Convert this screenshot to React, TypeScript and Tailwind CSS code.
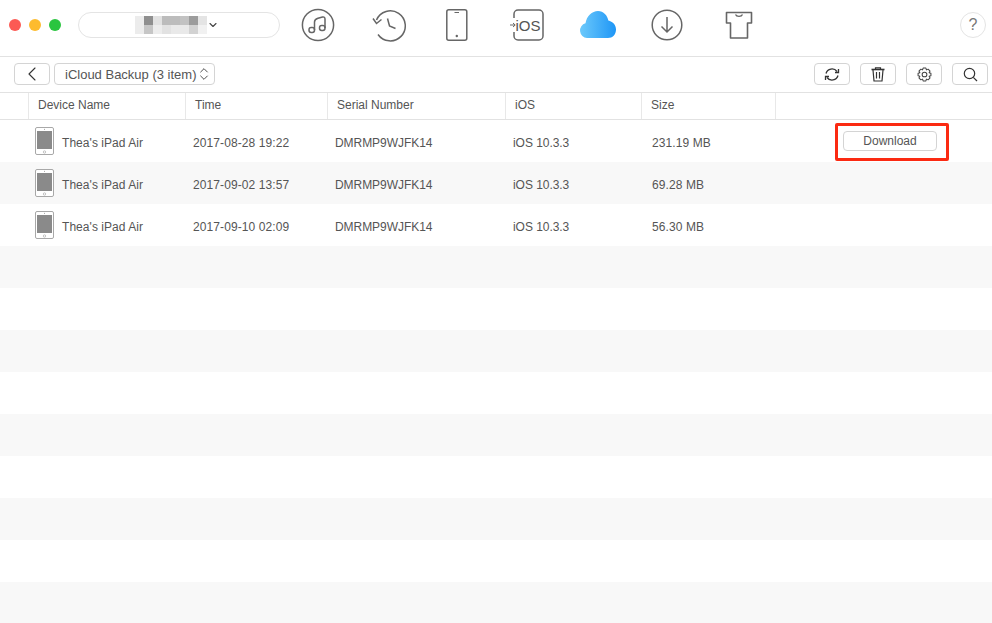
import { ChevronDown, ChevronLeft, ChevronsUpDown } from "lucide-react";

const columns = "grid grid-cols-[29px_157px_142px_178px_136px_134px_1fr]";

const backups = [
  { time: "2017-08-28 19:22", size: "231.19 MB", active: true },
  { time: "2017-09-02 13:57", size: "69.28 MB", active: false },
  { time: "2017-09-10 02:09", size: "56.30 MB", active: false },
];

const mosaic = [
  ["#ececec", "#8f8f8f", "#e2e2e2", "#bcbcbc", "#bcbcbc", "#c2c2c2", "#9c9c9c", "#e4e4e4"],
  ["#ececec", "#c6c6c6", "#ededed", "#e2e2e2", "#e9e9e9", "#e9e9e9", "#d2d2d2", "#f1f1f1"],
];

function Mosaic() {
  return (
    <svg width="72" height="18" className="block">
      {mosaic.map((row, y) =>
        row.map((fill, x) => (
          <rect key={`${x}-${y}`} x={x * 9} y={y * 9} width="9" height="9" fill={fill} />
        )),
      )}
    </svg>
  );
}

function NavIcons() {
  const stroke = { fill: "none", stroke: "#666", strokeWidth: 1.5 };
  return (
    <div className="flex items-center">
      {/* music */}
      <svg width="34" height="34" viewBox="0 0 34 34" className="ml-[21px]" {...stroke}>
        <circle cx="17" cy="17" r="15.6" />
        <rect x="8" y="19.5" width="5.5" height="5" rx="2.2" />
        <rect x="18.5" y="17.5" width="5.5" height="5" rx="2.2" />
        <path d="M13.5 22V14C13.5 11.5 15 11 17 10.3L21.5 9C23 8.6 24 9.4 24 11V20" />
      </svg>
      {/* history */}
      <svg width="36" height="34" viewBox="0 0 36 34" className="ml-[36px]" {...stroke}>
        <path d="M5.5 12A15 15 0 1 1 7 26.5" />
        <path d="M2 10.5L5.5 15.5L10.5 11.5" />
        <path d="M16.5 10.5L18.5 18L24.5 20.5" />
      </svg>
      {/* device */}
      <svg width="24" height="34" viewBox="0 0 24 34" className="ml-[37px]" {...stroke}>
        <rect x="2.8" y="1.8" width="20" height="30.5" rx="2" />
        <path d="M10.5 4.5H15" strokeWidth="1" />
        <circle cx="12.8" cy="28" r="1.2" fill="#666" stroke="none" />
      </svg>
      {/* to iOS */}
      <svg width="34" height="34" viewBox="0 0 34 34" className="ml-[42px]" {...stroke}>
        <path d="M4 10V6A4 4 0 0 1 8 2H29A4 4 0 0 1 33 6V28A4 4 0 0 1 29 32H8A4 4 0 0 1 4 28V24" />
        <path d="M0 17H5M3 15L5.2 17L3 19" strokeWidth="1" />
        <text x="5.5" y="22.5" fontSize="15" fontFamily="'Liberation Sans', sans-serif" fill="#555" stroke="none">
          iOS
        </text>
      </svg>
      {/* cloud */}
      <svg width="38" height="30" viewBox="0 0 38 30" className="ml-[35px]">
        <defs>
          <linearGradient id="cloudFill" x1="0" x2="1" y1="0" y2="0">
            <stop offset="0" stopColor="#6cc9fb" />
            <stop offset="1" stopColor="#1e96f6" />
          </linearGradient>
        </defs>
        <path
          d="M8 28A7.5 7.5 0 0 1 6.5 13.3C7.5 6 13 1 19 1C24.5 1 28.5 5.5 29.3 10.5C33.5 11.5 37 14.5 37 19.5C37 24.5 33.5 28 29 28Z"
          fill="url(#cloudFill)"
        />
      </svg>
      {/* download */}
      <svg width="32" height="32" viewBox="0 0 32 32" className="ml-[34px]" {...stroke}>
        <circle cx="16" cy="16" r="14.8" />
        <path d="M16 8V23M10.5 17.5L16 23L21.5 17.5" />
      </svg>
      {/* shirt */}
      <svg width="28" height="30" viewBox="0 0 28 30" className="ml-[42px]" {...stroke}>
        <path d="M1.5 2.5H26.5V13H22.5V28H5.5V13H1.5Z" strokeWidth="1.6" strokeLinejoin="round" />
        <path d="M10.5 4.5C11.5 7 16.5 7 17.5 4.5" strokeWidth="1.3" />
      </svg>
    </div>
  );
}

function ToolButton({ children }: { children: React.ReactNode }) {
  return (
    <button className="flex h-[22px] w-9 items-center justify-center rounded border border-[#d4d4d4] bg-white">
      {children}
    </button>
  );
}

function IpadIcon() {
  return (
    <svg width="20" height="28" viewBox="0 0 20 28">
      <rect x="0.5" y="0.5" width="18" height="27" rx="1.5" fill="#fff" stroke="#a8a8a8" />
      <rect x="2" y="4" width="15" height="18" fill="#8a8a8a" />
      <circle cx="9.5" cy="25" r="1.2" fill="none" stroke="#aaa" strokeWidth="0.7" />
      <circle cx="9.5" cy="2.2" r="0.5" fill="#888" />
    </svg>
  );
}

export default function App() {
  return (
    <div className="flex h-[623px] w-[992px] flex-col overflow-hidden bg-white font-['Liberation_Sans',Arial,sans-serif] text-xs text-[#555]">
      {/* title bar */}
      <div className="flex h-[57px] shrink-0 items-center border-b border-[#e2e2e2] pb-[7px] pl-[9px] pr-[6px]">
        <div className="flex gap-2">
          <span className="h-3 w-3 rounded-full bg-[#fc5a54]" />
          <span className="h-3 w-3 rounded-full bg-[#fdbb2e]" />
          <span className="h-3 w-3 rounded-full bg-[#2ac53f]" />
        </div>
        <div className="ml-[17px] flex h-[26px] w-[202px] items-center rounded-full border border-[#e4e4e4] pl-[56px]">
          <Mosaic />
          <ChevronDown size={12} strokeWidth={2.2} className="text-[#444]" />
        </div>
        <NavIcons />
        <div className="ml-auto flex h-[26px] w-[26px] items-center justify-center rounded-full border border-[#e4e4e4] text-base text-[#777]">
          ?
        </div>
      </div>

      {/* toolbar */}
      <div className="flex h-9 shrink-0 items-center border-b border-[#e2e2e2] pb-px pl-[14px] pr-1">
        <button className="flex h-[22px] w-9 items-center justify-center rounded border border-[#d4d4d4]">
          <ChevronLeft size={24} strokeWidth={1.1} className="text-[#333]" />
        </button>
        <button className="ml-1 flex h-[22px] w-[161px] items-center rounded border border-[#d4d4d4] pl-[10px] text-[13px] text-[#555]">
          <span className="pt-px">iCloud Backup (3 item)</span>
          <ChevronsUpDown size={16} strokeWidth={1.3} className="-ml-px text-[#333]" />
        </button>
        <div className="ml-auto flex gap-[10px]">
          <ToolButton>
            <svg width="16" height="15" viewBox="0 0 16 15" fill="none" stroke="#333" strokeWidth="1.3">
              <path d="M2 6.5A6.2 6.2 0 0 1 13 4.5M14 8.5A6.2 6.2 0 0 1 3 10.5" />
              <path d="M14.5 2V5.5H11M1.5 13V9.5H5" />
            </svg>
          </ToolButton>
          <ToolButton>
            <svg width="14" height="15" viewBox="0 0 14 15" fill="none" stroke="#333" strokeWidth="1.2">
              <path d="M0.5 2.5H13.5" strokeWidth="1.6" />
              <path d="M4.5 2.5V0.8H9.5V2.5M2 3L3 14H11L12 3M5.5 5V11.5M8.5 5V11.5" />
            </svg>
          </ToolButton>
          <ToolButton>
            <svg width="15" height="15" viewBox="0 0 14 14" fill="none" stroke="#444" strokeWidth="0.95">
              <path d="M5.7 1H8.3L8.8 2.7L10.4 2L12.2 3.8L11.3 5.3L13 5.8V8.2L11.3 8.7L12.2 10.2L10.4 12L8.8 11.3L8.3 13H5.7L5.2 11.3L3.6 12L1.8 10.2L2.7 8.7L1 8.2V5.8L2.7 5.3L1.8 3.8L3.6 2L5.2 2.7Z" strokeLinejoin="round" />
              <circle cx="7" cy="7" r="2.2" />
            </svg>
          </ToolButton>
          <ToolButton>
            <svg width="15" height="15" viewBox="0 0 15 15" fill="none" stroke="#333" strokeWidth="1.2">
              <circle cx="6.5" cy="6.5" r="5.2" />
              <path d="M10.3 10.3L14 14" />
            </svg>
          </ToolButton>
        </div>
      </div>

      {/* table header */}
      <div className={`${columns} h-[27px] shrink-0 border-b border-[#e2e2e2]`}>
        {["", "Device Name", "Time", "Serial Number", "iOS", "Size", ""].map((label, i) => (
          <div
            key={i}
            className={`flex items-center pb-[2px] pl-[9px] text-[#555] ${i < 6 ? "border-r border-[#e8e8e8]" : ""}`}
          >
            {label}
          </div>
        ))}
      </div>

      {/* rows */}
      <div className="relative flex-1 bg-[repeating-linear-gradient(to_bottom,#fff_0,#fff_42px,#f8f8f8_42px,#f8f8f8_84px)]">
        {backups.map((row) => (
          <div key={row.time} className={`${columns} h-[42px] items-center`}>
            <div />
            <div className="-ml-[1px] flex items-center gap-[7px] pl-[7px]">
              <IpadIcon />
              <span className="pt-1 tracking-[0.05px]">Thea's iPad Air</span>
            </div>
            <div className="pl-[7px] pt-1 tracking-[0.1px]">{row.time}</div>
            <div className="pl-[7px] pt-1 tracking-[-0.05px]">DMRMP9WJFK14</div>
            <div className="pl-[7px] pt-1 tracking-[-0.05px]">iOS 10.3.3</div>
            <div className="pl-[10px] pt-1 tracking-[0.1px]">{row.size}</div>
            <div className="flex justify-end pr-[55px]">
              {row.active && (
                <button className="h-5 w-[94px] rounded border border-[#d4d4d4] bg-white text-xs text-[#555]">
                  Download
                </button>
              )}
            </div>
          </div>
        ))}
        {/* red annotation box from the screenshot */}
        <div className="absolute left-[835px] top-[3px] h-[38px] w-[114px] rounded-[2px] border-[3px] border-[#fb2a12]" />
      </div>
    </div>
  );
}
